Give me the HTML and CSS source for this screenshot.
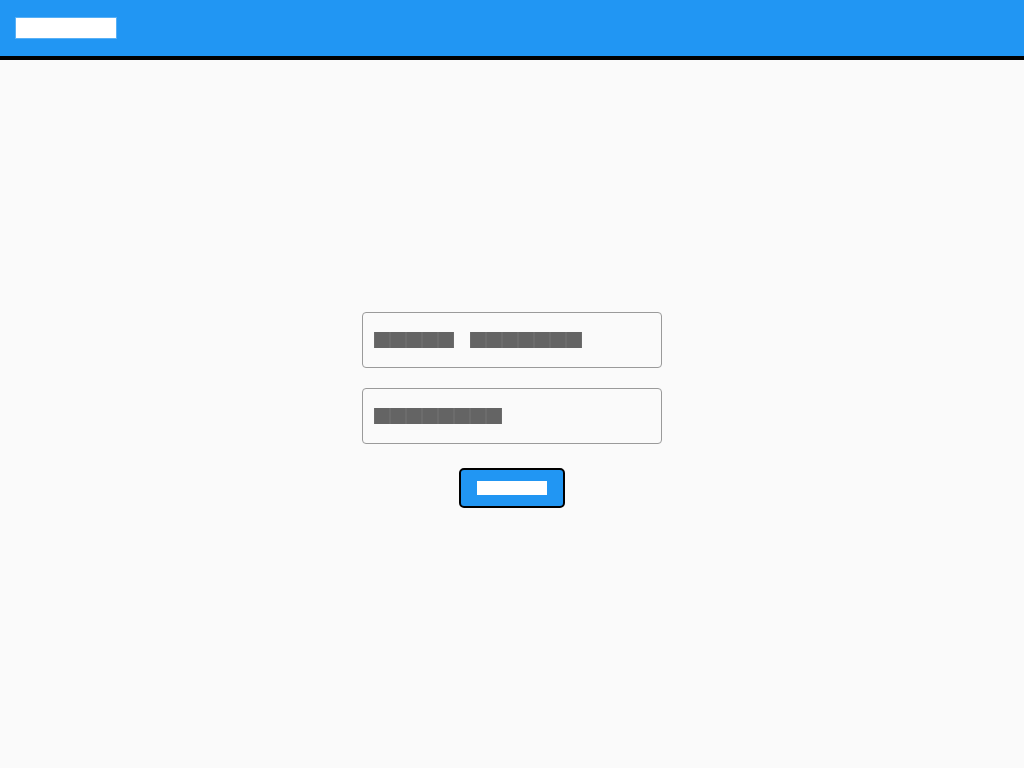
FILE: index.html
```html
<!DOCTYPE html>
<html lang="en">
<head>
<meta charset="utf-8">
<title>Login</title>
<link rel="stylesheet" href="styles.css">
</head>
<body>
<header class="topbar">
  <h1 class="title"><span class="blk blk-title">Login</span></h1>
</header>
<main class="main">
  <form class="form">
    <label class="field">
      <span class="ph"><span class="blk blk-ph">Email</span><span class="sp"> </span><span class="blk blk-ph">address</span></span>
    </label>
    <label class="field">
      <span class="ph"><span class="blk blk-ph">Password</span></span>
    </label>
    <button type="button" class="btn"><span class="blk blk-btn">Login</span></button>
  </form>
</main>
</body>
</html>
```
FILE: styles.css
```css
* { box-sizing: border-box; }
html, body { margin: 0; padding: 0; }
body {
  background: #fafafa;
  font-family: "Liberation Sans", Arial, sans-serif;
  min-height: 100vh;
}
.topbar {
  height: 60px;
  background: #2196f3;
  border-bottom: 4px solid #000;
  display: flex;
  align-items: center;
  padding: 0 16px;
}
.title {
  margin: 0;
  display: flex;
  align-items: center;
  height: 20px;
}
.blk {
  display: inline-block;
  font-family: "Liberation Mono", monospace;
  letter-spacing: 0.4em;
  color: transparent;
  white-space: pre;
}
.blk-title {
  font-size: 20px;
  line-height: 20px;
  height: 20px;
  background: #fff;
  box-shadow: 0 0 0 1px rgba(255,255,255,0.25);
}
.blk-ph {
  font-size: 16px;
  line-height: 16px;
  height: 16px;
  background: repeating-linear-gradient(90deg, #6c6c6c 0 1px, #646464 1px 15px, #6c6c6c 15px 16px);
}
.sp {
  display: inline-block;
  width: 16px;
  font-size: 16px;
  line-height: 16px;
  color: transparent;
}
.blk-btn {
  font-size: 14px;
  line-height: 14px;
  height: 14px;
  background: #fff;
}
.main {
  display: flex;
  justify-content: center;
  padding-top: 252px;
}
.form {
  width: 300px;
  display: flex;
  flex-direction: column;
  align-items: center;
}
.field {
  width: 300px;
  height: 56px;
  border: 1px solid #9a9a9a;
  border-radius: 4px;
  display: flex;
  align-items: center;
  padding: 0 11px;
  margin-bottom: 20px;
  background: #fafafa;
}
.ph {
  display: flex;
  align-items: center;
  height: 16px;
}
.field + .btn { margin-top: 4px; }
.btn {
  width: 106px;
  height: 40px;
  border: 2px solid #000;
  border-radius: 5px;
  background: #2196f3;
  display: flex;
  align-items: center;
  justify-content: center;
  padding: 0;
  cursor: pointer;
}
```
